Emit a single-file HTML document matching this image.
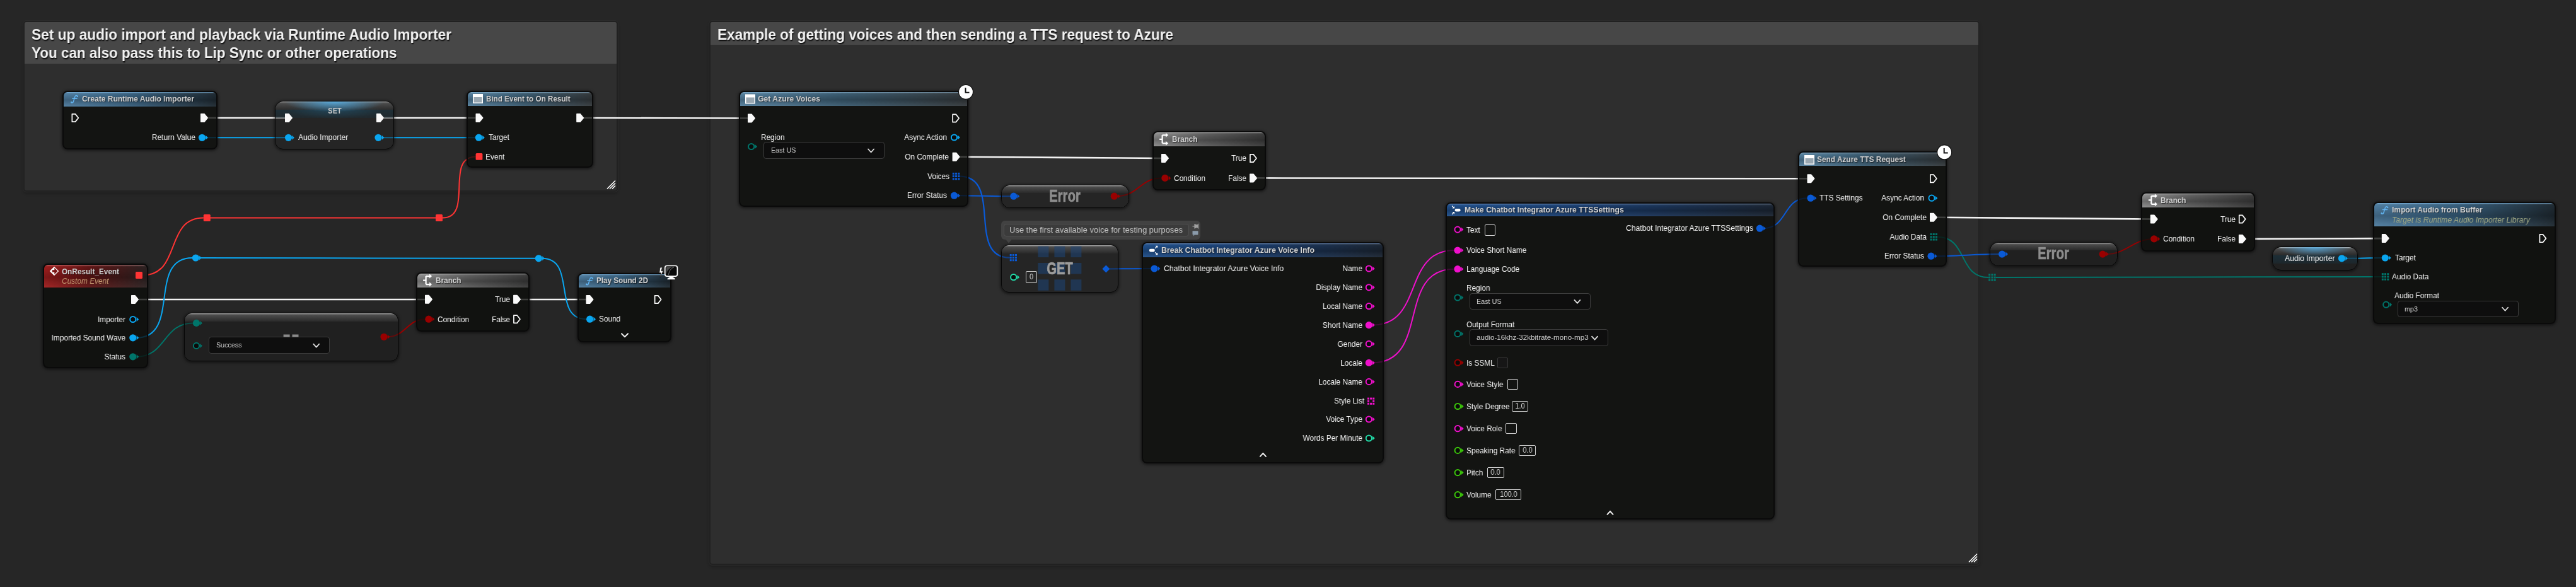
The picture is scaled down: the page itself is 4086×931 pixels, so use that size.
<!DOCTYPE html><html><head><meta charset="utf-8"><style>
html,body{margin:0;padding:0;}
body{width:4086px;height:931px;background:#262626;position:relative;overflow:hidden;font-family:"Liberation Sans",sans-serif;}
.cm{position:absolute;background:#2e2e2e;border-radius:3px;box-shadow:0 0 0 2px #212121,0 0 0 3.2px #2a2a2a,0 3px 4px 2px rgba(0,0,0,.25);}
.cmh{position:absolute;left:0;top:0;right:0;background:#474747;border-radius:3px 3px 0 0;}
.nd{position:absolute;box-sizing:border-box;border:2px solid #0a0a0a;border-radius:8px;background:rgba(11,13,10,.78);box-shadow:0 1px 4px 1px rgba(0,0,0,.55);overflow:hidden;}
.nh{position:absolute;left:0;right:0;top:0;border-radius:5px 5px 0 0;}
.cn{position:absolute;box-sizing:border-box;border:1.8px solid #060606;background:rgba(27,27,27,.45);box-shadow:0 1px 4px 1px rgba(0,0,0,.55);overflow:hidden;}
.cg{position:absolute;left:0;right:0;top:0;background:linear-gradient(180deg,#c8c8c8 0,#6a6a6a 1.5px,#4a4a4a 3px,#2e2e2e 90%,#2a2a2a 100%);}
.glow{position:absolute;left:0;right:0;top:0;bottom:0;}
.dd{position:absolute;box-sizing:border-box;border:1px solid #3c3c3c;border-radius:4px;background:#0e0e0e;}
.vb{position:absolute;box-sizing:border-box;border:1px solid #cfcfcf;border-radius:2px;}
.t{position:absolute;white-space:nowrap;will-change:transform;}
svg{position:absolute;left:0;top:0;}
</style></head><body><div class="cm" style="left:39px;top:35px;width:939px;height:266.5px"><div class="cmh" style="height:65.5px"></div></div><div class="cm" style="left:1127px;top:35px;width:2011px;height:858.5px"><div class="cmh" style="height:36px"></div></div><svg width="4086" height="931" viewBox="0 0 4086 931"><path d="M330,187 C370.67,187 411.33,187 452,187" fill="none" stroke="#f2f2f2" stroke-width="2.6"/><path d="M609,187 C657.5,187 706,187 754.5,187" fill="none" stroke="#f2f2f2" stroke-width="2.6"/><path d="M926,187 C1012.83,187 1099.17,187.5 1186,187.5" fill="none" stroke="#f2f2f2" stroke-width="2.6"/><path d="M220,475 C371.33,475 522.67,475 674,475" fill="none" stroke="#f2f2f2" stroke-width="2.6"/><path d="M826,475 C860.5,475 895,475 929.5,475" fill="none" stroke="#f2f2f2" stroke-width="2.6"/><path d="M1522,248.8 C1629.4,248.8 1734.6,251 1842,251" fill="none" stroke="#f2f2f2" stroke-width="2.6"/><path d="M1994,282.4 C2285.13,282.4 2575.37,283.3 2866.5,283.3" fill="none" stroke="#f2f2f2" stroke-width="2.6"/><path d="M3073,344.8 C3186.5,344.8 3297.3,347.5 3410.8,347.5" fill="none" stroke="#f2f2f2" stroke-width="2.6"/><path d="M3575,378.9 C3642.87,378.9 3709.93,378.1 3777.8,378.1" fill="none" stroke="#f2f2f2" stroke-width="2.6"/><path d="M326,218.3 C368,218.3 410,218.3 452,218.3" fill="none" stroke="#0aa6f0" stroke-width="2"/><path d="M605.6,218.3 C655.1,218.3 704.5,218.2 754,218.2" fill="none" stroke="#0aa6f0" stroke-width="2"/><path d="M216,535.8 C287.93,535.8 233.07,409 305,409" fill="none" stroke="#0aa6f0" stroke-width="2"/><path d="M316,409 C493.93,409 671.07,409.8 849,409.8" fill="none" stroke="#0aa6f0" stroke-width="2"/><path d="M860,409.8 C915.47,409.8 874.53,506.2 930,506.2" fill="none" stroke="#0aa6f0" stroke-width="2"/><path d="M3720,409.8 C3739.6,409.8 3758.4,409 3778,409" fill="none" stroke="#0aa6f0" stroke-width="2"/><path d="M226,436.5 C288.57,436.5 260.23,345.6 322.8,345.6" fill="none" stroke="#ff3434" stroke-width="2"/><path d="M328.3,345.6 C451.03,345.6 573.77,345.6 696.5,345.6" fill="none" stroke="#ff3434" stroke-width="2"/><path d="M702,345.6 C751.93,345.6 704.67,248.4 754.6,248.4" fill="none" stroke="#ff3434" stroke-width="2"/><path d="M216,565.8 C263.8,565.8 258.2,512.4 306,512.4" fill="none" stroke="#00756a" stroke-width="2"/><path d="M3073,375.8 C3121.4,375.8 3105.6,440 3154,440" fill="none" stroke="#00756a" stroke-width="2"/><path d="M3166,440 C3370.3,440 3573.5,438.9 3777.8,438.9" fill="none" stroke="#00756a" stroke-width="2"/><path d="M614,534.3 C643.7,534.3 645.3,506.2 675,506.2" fill="none" stroke="#990000" stroke-width="2"/><path d="M1772,311.2 C1804.93,311.2 1809.07,282.4 1842,282.4" fill="none" stroke="#990000" stroke-width="2"/><path d="M3340,403.1 C3373.63,403.1 3383.07,378.9 3416.7,378.9" fill="none" stroke="#990000" stroke-width="2"/><path d="M1522,279.6 C1591.57,279.6 1532.13,408.6 1601.7,408.6" fill="none" stroke="#0a5ad6" stroke-width="2.2"/><path d="M1518.5,310.2 C1546.83,310.2 1574.17,311.2 1602.5,311.2" fill="none" stroke="#0a5ad6" stroke-width="2"/><path d="M1760,426.4 C1782.07,426.4 1803.73,426 1825.8,426" fill="none" stroke="#0a5ad6" stroke-width="2"/><path d="M2796.5,362.2 C2835.93,362.2 2827.37,314.2 2866.8,314.2" fill="none" stroke="#0a5ad6" stroke-width="2"/><path d="M3068,406.2 C3103.17,406.2 3135.23,403.1 3170.4,403.1" fill="none" stroke="#0a5ad6" stroke-width="2"/><path d="M2176.5,515.6 C2259.47,515.6 2223.83,397 2306.8,397" fill="none" stroke="#f010cc" stroke-width="2"/><path d="M2176.5,575.4 C2269.5,575.4 2213.8,426.7 2306.8,426.7" fill="none" stroke="#f010cc" stroke-width="2"/></svg><div class="nd " style="left:99px;top:143.5px;width:246px;height:93px"><div class="nh" style="height:23px;background:linear-gradient(180deg,rgba(130,195,245,.85) 0,rgba(255,255,255,.10) 1.5px,rgba(0,0,0,.0) 3px,rgba(0,0,0,.22) 55%,rgba(255,255,255,.04) 100%),linear-gradient(90deg,#4f7da0 0%,#38607e 45%,#1f2a32 100%)"></div></div><div class="cn " style="left:436.2px;top:159.7px;width:189.1px;height:77.1px;border-radius:13px"><div class="cg" style="height:14px;border-radius:12px 12px 0 0"></div><div class="glow" style="background:radial-gradient(ellipse 42% 15px at 50% 1px, rgba(85,175,230,.85), rgba(60,140,200,0) 100%), radial-gradient(ellipse 40% 14px at 50% 13px, rgba(40,110,150,.35), rgba(30,70,90,0) 100%), linear-gradient(180deg, rgba(0,0,0,0) 13px, rgba(25,55,70,.55) 13.5px, rgba(25,50,62,.35) 26px, rgba(0,0,0,0) 26.5px)"></div></div><div class="nd " style="left:740px;top:144px;width:200.5px;height:122px"><div class="nh" style="height:22px;background:linear-gradient(180deg,rgba(150,200,235,.75) 0,rgba(255,255,255,.10) 1.5px,rgba(0,0,0,.0) 3px,rgba(0,0,0,.22) 55%,rgba(255,255,255,.04) 100%),linear-gradient(90deg,#55809e 0%,#3a5b70 45%,#34393c 100%)"></div></div><div class="nd " style="left:68px;top:417.5px;width:167px;height:166px"><div class="nh" style="height:36.5px;background:linear-gradient(180deg,rgba(240,150,150,.75) 0,rgba(255,255,255,.10) 1.5px,rgba(0,0,0,.0) 3px,rgba(0,0,0,.22) 55%,rgba(255,255,255,.04) 100%),linear-gradient(90deg,#a01e1e 0%,#5e1414 45%,#2c2222 100%)"></div></div><div class="cn " style="left:291.9px;top:496.2px;width:340.4px;height:76.6px;border-radius:12px"><div class="cg" style="height:13px;border-radius:11px 11px 0 0"></div></div><div class="dd" style="left:331.2px;top:534.3px;width:191.5px;height:27.2px"></div><div class="nd " style="left:659.6px;top:431.8px;width:180.7px;height:94.4px"><div class="nh" style="height:22px;background:linear-gradient(180deg,rgba(230,230,230,.9) 0,rgba(255,255,255,.10) 1.5px,rgba(0,0,0,.0) 3px,rgba(0,0,0,.22) 55%,rgba(255,255,255,.04) 100%),linear-gradient(90deg,#8c8c8c 0%,#5e5e5e 45%,#3a3a3a 100%)"></div></div><div class="nd " style="left:915.8px;top:432.7px;width:148.8px;height:110.1px"><div class="nh" style="height:21.3px;background:linear-gradient(180deg,rgba(130,195,245,.85) 0,rgba(255,255,255,.10) 1.5px,rgba(0,0,0,.0) 3px,rgba(0,0,0,.22) 55%,rgba(255,255,255,.04) 100%),linear-gradient(90deg,#4f7da0 0%,#38607e 45%,#1f2a32 100%)"></div></div><div class="nd " style="left:1171.5px;top:143.7px;width:364.5px;height:184.4px"><div class="nh" style="height:22.3px;background:linear-gradient(180deg,rgba(150,200,235,.75) 0,rgba(255,255,255,.10) 1.5px,rgba(0,0,0,.0) 3px,rgba(0,0,0,.22) 55%,rgba(255,255,255,.04) 100%),linear-gradient(90deg,#55809e 0%,#3a5b70 45%,#34393c 100%)"></div></div><div class="dd" style="left:1211.4px;top:225.1px;width:191.2px;height:27.2px"></div><div class="nd " style="left:1827.6px;top:208px;width:180.7px;height:94.4px"><div class="nh" style="height:22px;background:linear-gradient(180deg,rgba(230,230,230,.9) 0,rgba(255,255,255,.10) 1.5px,rgba(0,0,0,.0) 3px,rgba(0,0,0,.22) 55%,rgba(255,255,255,.04) 100%),linear-gradient(90deg,#8c8c8c 0%,#5e5e5e 45%,#3a3a3a 100%)"></div></div><div class="cn " style="left:1588.2px;top:292.5px;width:202.9px;height:37.6px;border-radius:13.5px"><div class="cg" style="height:12.5px;border-radius:12.5px 12.5px 0 0"></div></div><div style="position:absolute;left:1588px;top:350px;width:316.4px;height:29.8px;background:#424242;border-radius:6px"></div><div style="position:absolute;left:1592.2px;top:354.6px;width:293.6px;height:20.9px;box-sizing:border-box;background:#3b3b3b;border:1px solid #505050;border-radius:4px"></div><div class="cn " style="left:1588.3px;top:388.1px;width:185.5px;height:75.6px;border-radius:12px"><div class="cg" style="height:13px;border-radius:11px 11px 0 0"></div></div><div class="vb" style="left:1627.3px;top:430.2px;width:17.4px;height:18.6px;border-color:#cfcfcf;background:transparent"></div><div class="nd " style="left:1811.4px;top:384px;width:383.3px;height:350.8px"><div class="nh" style="height:21.5px;background:linear-gradient(180deg,rgba(130,170,230,.9) 0,rgba(255,255,255,.10) 1.5px,rgba(0,0,0,.0) 3px,rgba(0,0,0,.22) 55%,rgba(255,255,255,.04) 100%),linear-gradient(90deg,#20508c 0%,#1a3c6c 45%,#1c2634 100%)"></div></div><div class="nd " style="left:2292.6px;top:320.5px;width:522.4px;height:503.8px"><div class="nh" style="height:20.7px;background:linear-gradient(180deg,rgba(130,170,230,.9) 0,rgba(255,255,255,.10) 1.5px,rgba(0,0,0,.0) 3px,rgba(0,0,0,.22) 55%,rgba(255,255,255,.04) 100%),linear-gradient(90deg,#20508c 0%,#1a3c6c 45%,#1c2634 100%)"></div></div><div class="vb" style="left:2354.6px;top:356px;width:17px;height:18px;border-color:#cfcfcf;background:transparent"></div><div class="dd" style="left:2331px;top:464.7px;width:191.9px;height:26.8px"></div><div class="dd" style="left:2331px;top:522.2px;width:219.6px;height:27.3px"></div><div class="vb" style="left:2374.5px;top:566.5px;width:17.5px;height:17.4px;border-color:#383838;background:#161616"></div><div class="vb" style="left:2390.5px;top:600.7px;width:17.3px;height:17.4px;border-color:#cfcfcf;background:transparent"></div><div class="vb" style="left:2397.5px;top:636px;width:26.3px;height:17px;border-color:#cfcfcf;background:transparent"></div><div class="vb" style="left:2388px;top:671px;width:18px;height:17.4px;border-color:#cfcfcf;background:transparent"></div><div class="vb" style="left:2409.3px;top:705.9px;width:26.7px;height:17px;border-color:#cfcfcf;background:transparent"></div><div class="vb" style="left:2358.7px;top:741.1px;width:27.3px;height:17px;border-color:#cfcfcf;background:transparent"></div><div class="vb" style="left:2372px;top:776.2px;width:41.3px;height:17px;border-color:#cfcfcf;background:transparent"></div><div class="nd " style="left:2851.7px;top:239.7px;width:235.9px;height:183.6px"><div class="nh" style="height:21.7px;background:linear-gradient(180deg,rgba(150,200,235,.75) 0,rgba(255,255,255,.10) 1.5px,rgba(0,0,0,.0) 3px,rgba(0,0,0,.22) 55%,rgba(255,255,255,.04) 100%),linear-gradient(90deg,#55809e 0%,#3a5b70 45%,#34393c 100%)"></div></div><div class="cn " style="left:3156.2px;top:383.9px;width:202.6px;height:38.1px;border-radius:13.5px"><div class="cg" style="height:12.5px;border-radius:12.5px 12.5px 0 0"></div></div><div class="nd " style="left:3396.4px;top:304.5px;width:180.7px;height:94.4px"><div class="nh" style="height:22px;background:linear-gradient(180deg,rgba(230,230,230,.9) 0,rgba(255,255,255,.10) 1.5px,rgba(0,0,0,.0) 3px,rgba(0,0,0,.22) 55%,rgba(255,255,255,.04) 100%),linear-gradient(90deg,#8c8c8c 0%,#5e5e5e 45%,#3a3a3a 100%)"></div></div><div class="cn " style="left:3603.8px;top:391.2px;width:136.2px;height:37.6px;border-radius:14px"><div class="cg" style="height:13px;border-radius:13px 13px 0 0"></div><div class="glow" style="background:radial-gradient(ellipse 45% 14px at 50% 1px, rgba(85,175,230,.8), rgba(60,140,200,0) 100%), linear-gradient(180deg, rgba(0,0,0,0) 12.5px, rgba(25,55,70,.6) 13px, rgba(25,50,62,.4) 25.5px, rgba(0,0,0,0) 26px)"></div></div><div class="nd " style="left:3764px;top:320px;width:290.2px;height:194.2px"><div class="nh" style="height:36.7px;background:linear-gradient(180deg,rgba(130,195,245,.85) 0,rgba(255,255,255,.10) 1.5px,rgba(0,0,0,.0) 3px,rgba(0,0,0,.22) 55%,rgba(255,255,255,.04) 100%),linear-gradient(90deg,#4f7da0 0%,#38607e 45%,#1f2a32 100%)"></div></div><div class="dd" style="left:3803.1px;top:476.6px;width:191.5px;height:26.7px"></div><svg width="4086" height="931" viewBox="0 0 4086 931"><path d="M963,299.5 L976,286.5" stroke="#ffffff" stroke-width="1.6"/><path d="M967,299.5 L976,290.5" stroke="#ffffff" stroke-width="1.6"/><path d="M971,299.5 L976,294.5" stroke="#ffffff" stroke-width="1.6"/><path d="M3123,891.5 L3136,878.5" stroke="#ffffff" stroke-width="1.6"/><path d="M3127,891.5 L3136,882.5" stroke="#ffffff" stroke-width="1.6"/><path d="M3131,891.5 L3136,886.5" stroke="#ffffff" stroke-width="1.6"/><path d="M123.1,153 C122.3,151 119.5,151.1 118.8,153.4 L116.5,161 C115.8,163.4 113.7,163.6 112.7,162.2 M114.9,156.2 L122.1,156.2" fill="none" stroke="#62b4f0" stroke-width="1.5" stroke-linecap="round"/><circle cx="122.7" cy="152.9" r="1.1" fill="#62b4f0"/><circle cx="113.3" cy="162" r="1.1" fill="#62b4f0"/><path d="M114.35,180.85 L119.5,180.85 L124.35,187 L119.5,193.15 L114.35,193.15 Z" fill="none" stroke="#fafafa" stroke-width="1.7" stroke-linejoin="round"/><path d="M318.8,180.8 L324,180.8 L329.2,187 L324,193.2 L318.8,193.2 Z" fill="#fafafa" stroke="#fafafa" stroke-width="1.6" stroke-linejoin="round"/><circle cx="320.5" cy="218.3" r="5.6" fill="#0aa6f0"/><path d="M326.3,214.8 L329.9,218.3 L326.3,221.8 Z" fill="#0aa6f0"/><path d="M452.8,180.8 L458,180.8 L463.2,187 L458,193.2 L452.8,193.2 Z" fill="#fafafa" stroke="#fafafa" stroke-width="1.6" stroke-linejoin="round"/><path d="M597.8,180.8 L603,180.8 L608.2,187 L603,193.2 L597.8,193.2 Z" fill="#fafafa" stroke="#fafafa" stroke-width="1.6" stroke-linejoin="round"/><circle cx="457.5" cy="218.3" r="5.6" fill="#0aa6f0"/><path d="M463.3,214.8 L466.9,218.3 L463.3,221.8 Z" fill="#0aa6f0"/><circle cx="600" cy="218.3" r="5.6" fill="#0aa6f0"/><path d="M605.8,214.8 L609.4,218.3 L605.8,221.8 Z" fill="#0aa6f0"/><rect x="750.75" y="149.75" width="14.5" height="13.5" fill="#9aa8b2" stroke="#ffffff" stroke-width="1.5"/><rect x="751" y="150" width="14" height="4" fill="#ffffff"/><path d="M755.3,180.8 L760.5,180.8 L765.7,187 L760.5,193.2 L755.3,193.2 Z" fill="#fafafa" stroke="#fafafa" stroke-width="1.6" stroke-linejoin="round"/><path d="M915,180.8 L920.2,180.8 L925.4,187 L920.2,193.2 L915,193.2 Z" fill="#fafafa" stroke="#fafafa" stroke-width="1.6" stroke-linejoin="round"/><circle cx="759.4" cy="218.2" r="5.6" fill="#0aa6f0"/><path d="M765.2,214.7 L768.8,218.2 L765.2,221.7 Z" fill="#0aa6f0"/><rect x="754.6" y="243" width="10.8" height="10.8" rx="1.5" fill="#ff3434"/><path d="M86,422.7 L93.3,430 L86,437.3 L78.7,430 Z" fill="#ffffff"/><path d="M82.8,428.3 L86.3,428.3 L86.3,424.7 L91.5,430 L86.3,435.3 L86.3,431.7 L82.8,431.7 Z" fill="#7a1515"/><rect x="215" y="431" width="11" height="11" rx="1.5" fill="#ff3434"/><path d="M208.8,468.8 L214,468.8 L219.2,475 L214,481.2 L208.8,481.2 Z" fill="#fafafa" stroke="#fafafa" stroke-width="1.6" stroke-linejoin="round"/><circle cx="210.8" cy="506.5" r="4.6" fill="#0b0b0b" stroke="#0aa6f0" stroke-width="2"/><path d="M216.6,503 L220.2,506.5 L216.6,510 Z" fill="#0aa6f0"/><circle cx="210.8" cy="535.8" r="5.6" fill="#0aa6f0"/><path d="M216.6,532.3 L220.2,535.8 L216.6,539.3 Z" fill="#0aa6f0"/><circle cx="210.8" cy="565.8" r="5.6" fill="#00756a"/><path d="M216.6,562.3 L220.2,565.8 L216.6,569.3 Z" fill="#00756a"/><rect x="449.6" y="530.5" width="10" height="4" fill="#8a8a8a"/><rect x="463.5" y="530.5" width="10" height="4" fill="#8a8a8a"/><circle cx="311.5" cy="512.4" r="5.6" fill="#00756a"/><path d="M317.3,508.9 L320.9,512.4 L317.3,515.9 Z" fill="#00756a"/><circle cx="311.5" cy="548.4" r="4.6" fill="#0b0b0b" stroke="#00756a" stroke-width="2"/><path d="M317.3,544.9 L320.9,548.4 L317.3,551.9 Z" fill="#00756a"/><path d="M497.2,545.7 L501.7,550.7 L506.2,545.7" fill="none" stroke="#dddddd" stroke-width="1.8" stroke-linecap="round" stroke-linejoin="round"/><circle cx="609" cy="534.3" r="5.6" fill="#990000"/><path d="M614.8,530.8 L618.4,534.3 L614.8,537.8 Z" fill="#990000"/><path d="M671.1,444.6 L676.1,444.6 M675.6,438.1 L675.6,451.1 M675.6,438.1 L682.1,438.1 M675.6,451.1 L682.1,451.1" fill="none" stroke="#ffffff" stroke-width="2.2"/><path d="M681.1,434.6 L685.1,438.1 L681.1,441.6 Z" fill="#ffffff"/><path d="M681.1,447.6 L685.1,451.1 L681.1,454.6 Z" fill="#ffffff"/><path d="M674.8,468.6 L680,468.6 L685.2,474.8 L680,481 L674.8,481 Z" fill="#fafafa" stroke="#fafafa" stroke-width="1.6" stroke-linejoin="round"/><path d="M814.9,468.6 L820.1,468.6 L825.3,474.8 L820.1,481 L814.9,481 Z" fill="#fafafa" stroke="#fafafa" stroke-width="1.6" stroke-linejoin="round"/><circle cx="679.9" cy="506.2" r="5.6" fill="#990000"/><path d="M685.7,502.7 L689.3,506.2 L685.7,509.7 Z" fill="#990000"/><path d="M814.95,500.05 L820.1,500.05 L824.95,506.2 L820.1,512.35 L814.95,512.35 Z" fill="none" stroke="#fafafa" stroke-width="1.7" stroke-linejoin="round"/><path d="M940.1,441.7 C939.3,439.7 936.5,439.8 935.8,442.1 L933.5,449.7 C932.8,452.1 930.7,452.3 929.7,450.9 M931.9,444.9 L939.1,444.9" fill="none" stroke="#62b4f0" stroke-width="1.5" stroke-linecap="round"/><circle cx="939.7" cy="441.6" r="1.1" fill="#62b4f0"/><circle cx="930.3" cy="450.7" r="1.1" fill="#62b4f0"/><path d="M930.3,468.8 L935.5,468.8 L940.7,475 L935.5,481.2 L930.3,481.2 Z" fill="#fafafa" stroke="#fafafa" stroke-width="1.6" stroke-linejoin="round"/><path d="M1038.65,468.85 L1043.8,468.85 L1048.65,475 L1043.8,481.15 L1038.65,481.15 Z" fill="none" stroke="#fafafa" stroke-width="1.7" stroke-linejoin="round"/><circle cx="935.6" cy="506.2" r="5.6" fill="#0aa6f0"/><path d="M941.4,502.7 L945,506.2 L941.4,509.7 Z" fill="#0aa6f0"/><path d="M986,529.3 L991,534.3 L996,529.3" fill="none" stroke="#eeeeee" stroke-width="2" stroke-linecap="round" stroke-linejoin="round"/><path d="M1047,424.2 L1050.5,424 L1048.8,429.7 L1051.8,429.7 L1047.2,440.3 L1048.5,432.7 L1045.8,432.7 Z" fill="#ffffff" stroke="#111" stroke-width=".6"/><rect x="1054.8" y="421.5" width="19.6" height="16.6" rx="3.2" fill="#0a0a0a" stroke="#ffffff" stroke-width="1.7"/><path d="M1057,435.2 C1058,428.7 1062,424.7 1068,423.2 L1057,423.2 Z" fill="#4a4a4a"/><path d="M1060.5,435.7 C1061.5,429.7 1064,425.7 1069,423.7" fill="none" stroke="#777" stroke-width="1"/><path d="M1062.8,438.9 L1066.6,438.9 L1071,441.9 Q1071.6,443.3 1070,443.3 L1059.4,443.3 Q1057.8,443.3 1058.4,441.9 Z" fill="#ffffff"/><rect x="1182.75" y="150.25" width="14.5" height="13.5" fill="#9aa8b2" stroke="#ffffff" stroke-width="1.5"/><rect x="1183" y="150.5" width="14" height="4" fill="#ffffff"/><circle cx="1532" cy="145.8" r="11.5" fill="#ffffff" stroke="#101010" stroke-width="1.2"/><path d="M1531.5,139.3 L1531.5,146.8 L1537.5,146.8" fill="none" stroke="#111" stroke-width="2"/><path d="M1186.8,181.3 L1192,181.3 L1197.2,187.5 L1192,193.7 L1186.8,193.7 Z" fill="#fafafa" stroke="#fafafa" stroke-width="1.6" stroke-linejoin="round"/><path d="M1511.15,181.35 L1516.3,181.35 L1521.15,187.5 L1516.3,193.65 L1511.15,193.65 Z" fill="none" stroke="#fafafa" stroke-width="1.7" stroke-linejoin="round"/><circle cx="1191.7" cy="232.5" r="4.6" fill="#0b0b0b" stroke="#00756a" stroke-width="2"/><path d="M1197.5,229 L1201.1,232.5 L1197.5,236 Z" fill="#00756a"/><path d="M1377.1,236.5 L1381.6,241.5 L1386.1,236.5" fill="none" stroke="#dddddd" stroke-width="1.8" stroke-linecap="round" stroke-linejoin="round"/><circle cx="1513.5" cy="218" r="4.6" fill="#0b0b0b" stroke="#0aa6f0" stroke-width="2"/><path d="M1519.3,214.5 L1522.9,218 L1519.3,221.5 Z" fill="#0aa6f0"/><path d="M1511.4,242.6 L1516.6,242.6 L1521.8,248.8 L1516.6,255 L1511.4,255 Z" fill="#fafafa" stroke="#fafafa" stroke-width="1.6" stroke-linejoin="round"/><rect x="1510.8" y="273.85" width="3" height="3" fill="#0a5ad6"/><rect x="1515.05" y="273.85" width="3" height="3" fill="#0a5ad6"/><rect x="1519.3" y="273.85" width="3" height="3" fill="#0a5ad6"/><rect x="1510.8" y="278.1" width="3" height="3" fill="#0a5ad6"/><rect x="1515.05" y="278.1" width="3" height="3" fill="#0a5ad6"/><rect x="1519.3" y="278.1" width="3" height="3" fill="#0a5ad6"/><rect x="1510.8" y="282.35" width="3" height="3" fill="#0a5ad6"/><rect x="1515.05" y="282.35" width="3" height="3" fill="#0a5ad6"/><rect x="1519.3" y="282.35" width="3" height="3" fill="#0a5ad6"/><circle cx="1513.5" cy="310.2" r="5.6" fill="#0a5ad6"/><path d="M1519.3,306.7 L1522.9,310.2 L1519.3,313.7 Z" fill="#0a5ad6"/><path d="M1839.1,220.8 L1844.1,220.8 M1843.6,214.3 L1843.6,227.3 M1843.6,214.3 L1850.1,214.3 M1843.6,227.3 L1850.1,227.3" fill="none" stroke="#ffffff" stroke-width="2.2"/><path d="M1849.1,210.8 L1853.1,214.3 L1849.1,217.8 Z" fill="#ffffff"/><path d="M1849.1,223.8 L1853.1,227.3 L1849.1,230.8 Z" fill="#ffffff"/><path d="M1842.8,244.8 L1848,244.8 L1853.2,251 L1848,257.2 L1842.8,257.2 Z" fill="#fafafa" stroke="#fafafa" stroke-width="1.6" stroke-linejoin="round"/><path d="M1982.95,244.85 L1988.1,244.85 L1992.95,251 L1988.1,257.15 L1982.95,257.15 Z" fill="none" stroke="#fafafa" stroke-width="1.7" stroke-linejoin="round"/><circle cx="1847.9" cy="282.4" r="5.6" fill="#990000"/><path d="M1853.7,278.9 L1857.3,282.4 L1853.7,285.9 Z" fill="#990000"/><path d="M1982.9,276.2 L1988.1,276.2 L1993.3,282.4 L1988.1,288.6 L1982.9,288.6 Z" fill="#fafafa" stroke="#fafafa" stroke-width="1.6" stroke-linejoin="round"/><circle cx="1607.8" cy="311.2" r="5.6" fill="#0a5ad6"/><path d="M1613.6,307.7 L1617.2,311.2 L1613.6,314.7 Z" fill="#0a5ad6"/><circle cx="1767.3" cy="311.2" r="5.6" fill="#990000"/><path d="M1773.1,307.7 L1776.7,311.2 L1773.1,314.7 Z" fill="#990000"/><path d="M1595,379.6 L1600,385.5 L1605,379.6 Z" fill="#424242"/><path d="M1891.5,358.8 L1895,358.8 M1895,355.8 L1895,361.8 L1899,360.3 L1900.5,361.8 L1900.5,355.8 L1899,357.3 Z" stroke="#a0a0a0" stroke-width="1.2" fill="#a0a0a0"/><rect x="1891.5" y="366.2" width="9" height="6.2" rx="1" fill="#8a9aaa"/><path d="M1893,372.4 L1893,374.5 L1895,372.4 Z" fill="#8a9aaa"/><rect x="1646.4" y="390.6" width="17" height="17.5" fill="rgba(30,70,120,.55)"/><rect x="1646.4" y="417" width="17" height="17.5" fill="rgba(30,70,120,.55)"/><rect x="1646.4" y="443.3" width="17" height="17.5" fill="rgba(30,70,120,.55)"/><rect x="1672.4" y="390.6" width="17" height="17.5" fill="rgba(30,70,120,.55)"/><rect x="1672.4" y="417" width="17" height="17.5" fill="rgba(30,70,120,.55)"/><rect x="1672.4" y="443.3" width="17" height="17.5" fill="rgba(30,70,120,.55)"/><rect x="1698.4" y="390.6" width="17" height="17.5" fill="rgba(30,70,120,.55)"/><rect x="1698.4" y="417" width="17" height="17.5" fill="rgba(30,70,120,.55)"/><rect x="1698.4" y="443.3" width="17" height="17.5" fill="rgba(30,70,120,.55)"/><rect x="1601.7" y="402.95" width="3" height="3" fill="#0a5ad6"/><rect x="1605.85" y="402.95" width="3" height="3" fill="#0a5ad6"/><rect x="1610" y="402.95" width="3" height="3" fill="#0a5ad6"/><rect x="1601.7" y="407.1" width="3" height="3" fill="#0a5ad6"/><rect x="1605.85" y="407.1" width="3" height="3" fill="#0a5ad6"/><rect x="1610" y="407.1" width="3" height="3" fill="#0a5ad6"/><rect x="1601.7" y="411.25" width="3" height="3" fill="#0a5ad6"/><rect x="1605.85" y="411.25" width="3" height="3" fill="#0a5ad6"/><rect x="1610" y="411.25" width="3" height="3" fill="#0a5ad6"/><circle cx="1607.7" cy="439.7" r="4.6" fill="#0b0b0b" stroke="#22dca8" stroke-width="2"/><path d="M1613.5,436.2 L1617.1,439.7 L1613.5,443.2 Z" fill="#22dca8"/><path d="M1754.4,420.4 L1760.4,426.4 L1754.4,432.4 L1748.4,426.4 Z" fill="#0a5ad6"/><rect x="1822.8" y="394.8" width="9" height="4.6" rx="2.3" fill="#fff"/><path d="M1832.3,393.8 L1835.3,390.8 M1832.3,400.3 L1835.3,403.3" stroke="#fff" stroke-width="1.3"/><path d="M1832.8,389.8 L1836.3,389.8 L1836.3,393.3 Z M1832.8,404.3 L1836.3,404.3 L1836.3,400.8 Z" fill="#fff"/><circle cx="1831" cy="426" r="5.6" fill="#0a5ad6"/><path d="M1836.8,422.5 L1840.4,426 L1836.8,429.5 Z" fill="#0a5ad6"/><circle cx="2171.3" cy="426" r="4.6" fill="#0b0b0b" stroke="#f010cc" stroke-width="2"/><path d="M2177.1,422.5 L2180.7,426 L2177.1,429.5 Z" fill="#f010cc"/><circle cx="2171.3" cy="455.8" r="4.6" fill="#0b0b0b" stroke="#f010cc" stroke-width="2"/><path d="M2177.1,452.3 L2180.7,455.8 L2177.1,459.3 Z" fill="#f010cc"/><circle cx="2171.3" cy="485.7" r="4.6" fill="#0b0b0b" stroke="#f010cc" stroke-width="2"/><path d="M2177.1,482.2 L2180.7,485.7 L2177.1,489.2 Z" fill="#f010cc"/><circle cx="2171.3" cy="515.6" r="5.6" fill="#f010cc"/><path d="M2177.1,512.1 L2180.7,515.6 L2177.1,519.1 Z" fill="#f010cc"/><circle cx="2171.3" cy="545.4" r="4.6" fill="#0b0b0b" stroke="#f010cc" stroke-width="2"/><path d="M2177.1,541.9 L2180.7,545.4 L2177.1,548.9 Z" fill="#f010cc"/><circle cx="2171.3" cy="575.4" r="5.6" fill="#f010cc"/><path d="M2177.1,571.9 L2180.7,575.4 L2177.1,578.9 Z" fill="#f010cc"/><circle cx="2171.3" cy="605.4" r="4.6" fill="#0b0b0b" stroke="#f010cc" stroke-width="2"/><path d="M2177.1,601.9 L2180.7,605.4 L2177.1,608.9 Z" fill="#f010cc"/><rect x="2169" y="630.6" width="3" height="3" fill="#f010cc"/><rect x="2173.1" y="630.6" width="3" height="3" fill="#f010cc"/><rect x="2177.2" y="630.6" width="3" height="3" fill="#f010cc"/><rect x="2169" y="634.7" width="3" height="3" fill="#f010cc"/><rect x="2177.2" y="634.7" width="3" height="3" fill="#f010cc"/><rect x="2169" y="638.8" width="3" height="3" fill="#f010cc"/><rect x="2173.1" y="638.8" width="3" height="3" fill="#f010cc"/><rect x="2177.2" y="638.8" width="3" height="3" fill="#f010cc"/><circle cx="2171.3" cy="665" r="4.6" fill="#0b0b0b" stroke="#f010cc" stroke-width="2"/><path d="M2177.1,661.5 L2180.7,665 L2177.1,668.5 Z" fill="#f010cc"/><circle cx="2171.3" cy="695" r="4.6" fill="#0b0b0b" stroke="#22dca8" stroke-width="2"/><path d="M2177.1,691.5 L2180.7,695 L2177.1,698.5 Z" fill="#22dca8"/><path d="M1998.9,723.9 L2003.4,718.9 L2007.9,723.9" fill="none" stroke="#eeeeee" stroke-width="2" stroke-linecap="round" stroke-linejoin="round"/><rect x="2307.6" y="331" width="9" height="4.6" rx="2.3" fill="#fff"/><path d="M2303.1,326.5 L2306.1,329.5 M2303.1,340 L2306.1,337" stroke="#fff" stroke-width="1.3"/><path d="M2307.1,330.5 L2307.1,327 L2303.6,330.5 Z M2307.1,336 L2307.1,339.5 L2303.6,336 Z" fill="#fff"/><circle cx="2312" cy="364.1" r="4.6" fill="#0b0b0b" stroke="#f010cc" stroke-width="2"/><path d="M2317.8,360.6 L2321.4,364.1 L2317.8,367.6 Z" fill="#f010cc"/><circle cx="2791.3" cy="362.2" r="5.6" fill="#0a5ad6"/><path d="M2797.1,358.7 L2800.7,362.2 L2797.1,365.7 Z" fill="#0a5ad6"/><circle cx="2312" cy="397" r="5.6" fill="#f010cc"/><path d="M2317.8,393.5 L2321.4,397 L2317.8,400.5 Z" fill="#f010cc"/><circle cx="2312" cy="426.7" r="5.6" fill="#f010cc"/><path d="M2317.8,423.2 L2321.4,426.7 L2317.8,430.2 Z" fill="#f010cc"/><circle cx="2312" cy="472" r="4.6" fill="#0b0b0b" stroke="#00756a" stroke-width="2"/><path d="M2317.8,468.5 L2321.4,472 L2317.8,475.5 Z" fill="#00756a"/><path d="M2497.4,475.9 L2501.9,480.9 L2506.4,475.9" fill="none" stroke="#dddddd" stroke-width="1.8" stroke-linecap="round" stroke-linejoin="round"/><circle cx="2312" cy="529.4" r="4.6" fill="#0b0b0b" stroke="#00756a" stroke-width="2"/><path d="M2317.8,525.9 L2321.4,529.4 L2317.8,532.9 Z" fill="#00756a"/><path d="M2525,533.7 L2529.5,538.7 L2534,533.7" fill="none" stroke="#dddddd" stroke-width="1.8" stroke-linecap="round" stroke-linejoin="round"/><circle cx="2312.2" cy="575.2" r="4.6" fill="#0b0b0b" stroke="#990000" stroke-width="2"/><path d="M2318,571.7 L2321.6,575.2 L2318,578.7 Z" fill="#990000"/><circle cx="2312.2" cy="609.4" r="4.6" fill="#0b0b0b" stroke="#f010cc" stroke-width="2"/><path d="M2318,605.9 L2321.6,609.4 L2318,612.9 Z" fill="#f010cc"/><circle cx="2312.2" cy="644.5" r="4.6" fill="#0b0b0b" stroke="#3cc80a" stroke-width="2"/><path d="M2318,641 L2321.6,644.5 L2318,648 Z" fill="#3cc80a"/><circle cx="2312.2" cy="679.7" r="4.6" fill="#0b0b0b" stroke="#f010cc" stroke-width="2"/><path d="M2318,676.2 L2321.6,679.7 L2318,683.2 Z" fill="#f010cc"/><circle cx="2312.2" cy="714.4" r="4.6" fill="#0b0b0b" stroke="#3cc80a" stroke-width="2"/><path d="M2318,710.9 L2321.6,714.4 L2318,717.9 Z" fill="#3cc80a"/><circle cx="2312.2" cy="749.6" r="4.6" fill="#0b0b0b" stroke="#3cc80a" stroke-width="2"/><path d="M2318,746.1 L2321.6,749.6 L2318,753.1 Z" fill="#3cc80a"/><circle cx="2312.2" cy="784.7" r="4.6" fill="#0b0b0b" stroke="#3cc80a" stroke-width="2"/><path d="M2318,781.2 L2321.6,784.7 L2318,788.2 Z" fill="#3cc80a"/><path d="M2549.5,815.8 L2554,810.8 L2558.5,815.8" fill="none" stroke="#eeeeee" stroke-width="2" stroke-linecap="round" stroke-linejoin="round"/><rect x="2862.75" y="246.75" width="14.5" height="13.5" fill="#9aa8b2" stroke="#ffffff" stroke-width="1.5"/><rect x="2863" y="247" width="14" height="4" fill="#ffffff"/><circle cx="3084.2" cy="241.4" r="11.5" fill="#ffffff" stroke="#101010" stroke-width="1.2"/><path d="M3083.7,234.9 L3083.7,242.4 L3089.7,242.4" fill="none" stroke="#111" stroke-width="2"/><path d="M2867.3,277.1 L2872.5,277.1 L2877.7,283.3 L2872.5,289.5 L2867.3,289.5 Z" fill="#fafafa" stroke="#fafafa" stroke-width="1.6" stroke-linejoin="round"/><path d="M3061.85,277.15 L3067,277.15 L3071.85,283.3 L3067,289.45 L3061.85,289.45 Z" fill="none" stroke="#fafafa" stroke-width="1.7" stroke-linejoin="round"/><circle cx="2872" cy="314.2" r="5.6" fill="#0a5ad6"/><path d="M2877.8,310.7 L2881.4,314.2 L2877.8,317.7 Z" fill="#0a5ad6"/><circle cx="3064" cy="314.2" r="4.6" fill="#0b0b0b" stroke="#0aa6f0" stroke-width="2"/><path d="M3069.8,310.7 L3073.4,314.2 L3069.8,317.7 Z" fill="#0aa6f0"/><path d="M3061.8,338.6 L3067,338.6 L3072.2,344.8 L3067,351 L3061.8,351 Z" fill="#fafafa" stroke="#fafafa" stroke-width="1.6" stroke-linejoin="round"/><rect x="3061.5" y="370.05" width="3" height="3" fill="#00756a"/><rect x="3065.75" y="370.05" width="3" height="3" fill="#00756a"/><rect x="3070" y="370.05" width="3" height="3" fill="#00756a"/><rect x="3061.5" y="374.3" width="3" height="3" fill="#00756a"/><rect x="3065.75" y="374.3" width="3" height="3" fill="#00756a"/><rect x="3070" y="374.3" width="3" height="3" fill="#00756a"/><rect x="3061.5" y="378.55" width="3" height="3" fill="#00756a"/><rect x="3065.75" y="378.55" width="3" height="3" fill="#00756a"/><rect x="3070" y="378.55" width="3" height="3" fill="#00756a"/><circle cx="3063" cy="406.2" r="5.6" fill="#0a5ad6"/><path d="M3068.8,402.7 L3072.4,406.2 L3068.8,409.7 Z" fill="#0a5ad6"/><circle cx="3175.6" cy="403.1" r="5.6" fill="#0a5ad6"/><path d="M3181.4,399.6 L3185,403.1 L3181.4,406.6 Z" fill="#0a5ad6"/><circle cx="3335.2" cy="403.1" r="5.6" fill="#990000"/><path d="M3341,399.6 L3344.6,403.1 L3341,406.6 Z" fill="#990000"/><path d="M3407.9,317.3 L3412.9,317.3 M3412.4,310.8 L3412.4,323.8 M3412.4,310.8 L3418.9,310.8 M3412.4,323.8 L3418.9,323.8" fill="none" stroke="#ffffff" stroke-width="2.2"/><path d="M3417.9,307.3 L3421.9,310.8 L3417.9,314.3 Z" fill="#ffffff"/><path d="M3417.9,320.3 L3421.9,323.8 L3417.9,327.3 Z" fill="#ffffff"/><path d="M3411.6,341.3 L3416.8,341.3 L3422,347.5 L3416.8,353.7 L3411.6,353.7 Z" fill="#fafafa" stroke="#fafafa" stroke-width="1.6" stroke-linejoin="round"/><path d="M3551.75,341.35 L3556.9,341.35 L3561.75,347.5 L3556.9,353.65 L3551.75,353.65 Z" fill="none" stroke="#fafafa" stroke-width="1.7" stroke-linejoin="round"/><circle cx="3416.7" cy="378.9" r="5.6" fill="#990000"/><path d="M3422.5,375.4 L3426.1,378.9 L3422.5,382.4 Z" fill="#990000"/><path d="M3551.7,372.7 L3556.9,372.7 L3562.1,378.9 L3556.9,385.1 L3551.7,385.1 Z" fill="#fafafa" stroke="#fafafa" stroke-width="1.6" stroke-linejoin="round"/><circle cx="3714.5" cy="409.8" r="5.6" fill="#0aa6f0"/><path d="M3720.3,406.3 L3723.9,409.8 L3720.3,413.3 Z" fill="#0aa6f0"/><path d="M3787.6,329.2 C3786.8,327.2 3784,327.3 3783.3,329.6 L3781,337.2 C3780.3,339.6 3778.2,339.8 3777.2,338.4 M3779.4,332.4 L3786.6,332.4" fill="none" stroke="#62b4f0" stroke-width="1.5" stroke-linecap="round"/><circle cx="3787.2" cy="329.1" r="1.1" fill="#62b4f0"/><circle cx="3777.8" cy="338.2" r="1.1" fill="#62b4f0"/><path d="M3778.6,371.9 L3783.8,371.9 L3789,378.1 L3783.8,384.3 L3778.6,384.3 Z" fill="#fafafa" stroke="#fafafa" stroke-width="1.6" stroke-linejoin="round"/><path d="M4028.45,371.95 L4033.6,371.95 L4038.45,378.1 L4033.6,384.25 L4028.45,384.25 Z" fill="none" stroke="#fafafa" stroke-width="1.7" stroke-linejoin="round"/><circle cx="3783.3" cy="409" r="5.6" fill="#0aa6f0"/><path d="M3789.1,405.5 L3792.7,409 L3789.1,412.5 Z" fill="#0aa6f0"/><rect x="3777.8" y="433.15" width="3" height="3" fill="#00756a"/><rect x="3782.05" y="433.15" width="3" height="3" fill="#00756a"/><rect x="3786.3" y="433.15" width="3" height="3" fill="#00756a"/><rect x="3777.8" y="437.4" width="3" height="3" fill="#00756a"/><rect x="3782.05" y="437.4" width="3" height="3" fill="#00756a"/><rect x="3786.3" y="437.4" width="3" height="3" fill="#00756a"/><rect x="3777.8" y="441.65" width="3" height="3" fill="#00756a"/><rect x="3782.05" y="441.65" width="3" height="3" fill="#00756a"/><rect x="3786.3" y="441.65" width="3" height="3" fill="#00756a"/><circle cx="3784.8" cy="483.2" r="4.6" fill="#0b0b0b" stroke="#00756a" stroke-width="2"/><path d="M3790.6,479.7 L3794.2,483.2 L3790.6,486.7 Z" fill="#00756a"/><path d="M3969.1,487.75 L3973.6,492.75 L3978.1,487.75" fill="none" stroke="#dddddd" stroke-width="1.8" stroke-linecap="round" stroke-linejoin="round"/><rect x="322.8" y="340.1" width="11" height="11" rx="1.5" fill="#ff3434"/><rect x="691" y="340.1" width="11" height="11" rx="1.5" fill="#ff3434"/><circle cx="310.4" cy="409" r="5.6" fill="#0aa6f0"/><path d="M316.2,405.5 L319.8,409 L316.2,412.5 Z" fill="#0aa6f0"/><circle cx="854.4" cy="409.8" r="5.6" fill="#0aa6f0"/><path d="M860.2,406.3 L863.8,409.8 L860.2,413.3 Z" fill="#0aa6f0"/><rect x="3154.2" y="434.25" width="3" height="3" fill="#00756a"/><rect x="3158.45" y="434.25" width="3" height="3" fill="#00756a"/><rect x="3162.7" y="434.25" width="3" height="3" fill="#00756a"/><rect x="3154.2" y="438.5" width="3" height="3" fill="#00756a"/><rect x="3158.45" y="438.5" width="3" height="3" fill="#00756a"/><rect x="3162.7" y="438.5" width="3" height="3" fill="#00756a"/><rect x="3154.2" y="442.75" width="3" height="3" fill="#00756a"/><rect x="3158.45" y="442.75" width="3" height="3" fill="#00756a"/><rect x="3162.7" y="442.75" width="3" height="3" fill="#00756a"/></svg><div class="t" style="left:49.8px;top:42.96px;font-size:24.5px;line-height:24.5px;font-weight:bold;color:#f2f2f2;text-shadow:1px 1.5px 1.5px rgba(0,0,0,.85);transform:scaleX(0.9260);transform-origin:0 50%;">Set up audio import and playback via Runtime Audio Importer</div><div class="t" style="left:49.8px;top:71.76px;font-size:24.5px;line-height:24.5px;font-weight:bold;color:#f2f2f2;text-shadow:1px 1.5px 1.5px rgba(0,0,0,.85);transform:scaleX(0.9159);transform-origin:0 50%;">You can also pass this to Lip Sync or other operations</div><div class="t" style="left:1138px;top:43.26px;font-size:24.5px;line-height:24.5px;font-weight:bold;color:#f2f2f2;text-shadow:1px 1.5px 1.5px rgba(0,0,0,.85);transform:scaleX(0.9215);transform-origin:0 50%;">Example of getting voices and then sending a TTS request to Azure</div><div class="t" style="left:130.3px;top:150px;font-size:13px;line-height:13px;font-weight:bold;color:#d6d6d6;text-shadow:1px 1px 1px rgba(0,0,0,.6);transform:scaleX(0.9253);transform-origin:0 50%;">Create Runtime Audio Importer</div><div class="t" style="left:309.7px;top:211.47px;font-size:13px;line-height:13px;color:#f8f8f8;transform:translateX(-100%) scaleX(0.9236);transform-origin:100% 50%;">Return Value</div><div class="t" style="left:530.6px;top:169px;font-size:13px;line-height:13px;font-weight:bold;color:#cacaca;transform:translateX(-50%) scaleX(0.8539);transform-origin:50% 50%;">SET</div><div class="t" style="left:472.5px;top:211.47px;font-size:13px;line-height:13px;color:#f8f8f8;transform:scaleX(0.9289);transform-origin:0 50%;">Audio Importer</div><div class="t" style="left:770.6px;top:150.2px;font-size:13px;line-height:13px;font-weight:bold;color:#d6d6d6;text-shadow:1px 1px 1px rgba(0,0,0,.6);transform:scaleX(0.8979);transform-origin:0 50%;">Bind Event to On Result</div><div class="t" style="left:775px;top:211.47px;font-size:13px;line-height:13px;color:#f8f8f8;transform:scaleX(0.9100);transform-origin:0 50%;">Target</div><div class="t" style="left:770px;top:241.97px;font-size:13px;line-height:13px;color:#f8f8f8;transform:scaleX(0.9100);transform-origin:0 50%;">Event</div><div class="t" style="left:98.3px;top:423.5px;font-size:13px;line-height:13px;font-weight:bold;color:#d6d6d6;text-shadow:1px 1px 1px rgba(0,0,0,.6);transform:scaleX(0.9062);transform-origin:0 50%;">OnResult_Event</div><div class="t" style="left:98.3px;top:438.8px;font-size:13px;line-height:13px;font-style:italic;color:#c49a72;transform:scaleX(0.9124);transform-origin:0 50%;">Custom Event</div><div class="t" style="left:199.4px;top:499.97px;font-size:13px;line-height:13px;color:#f8f8f8;transform:translateX(-100%) scaleX(0.9100);transform-origin:100% 50%;">Importer</div><div class="t" style="left:199.4px;top:529.07px;font-size:13px;line-height:13px;color:#f8f8f8;transform:translateX(-100%) scaleX(0.9110);transform-origin:100% 50%;">Imported Sound Wave</div><div class="t" style="left:199.4px;top:559.17px;font-size:13px;line-height:13px;color:#f8f8f8;transform:translateX(-100%) scaleX(0.9100);transform-origin:100% 50%;">Status</div><div class="t" style="left:342.7px;top:542.47px;font-size:11.8px;line-height:11.8px;color:#d2d2d2;transform:scaleX(0.9100);transform-origin:0 50%;">Success</div><div class="t" style="left:690.5px;top:438px;font-size:13px;line-height:13px;font-weight:bold;color:#d6d6d6;text-shadow:1px 1px 1px rgba(0,0,0,.6);transform:scaleX(0.9041);transform-origin:0 50%;">Branch</div><div class="t" style="left:808.8px;top:468.27px;font-size:13px;line-height:13px;color:#f8f8f8;transform:translateX(-100%) scaleX(0.9100);transform-origin:100% 50%;">True</div><div class="t" style="left:694.1px;top:499.67px;font-size:13px;line-height:13px;color:#f8f8f8;transform:scaleX(0.9100);transform-origin:0 50%;">Condition</div><div class="t" style="left:808.8px;top:499.67px;font-size:13px;line-height:13px;color:#f8f8f8;transform:translateX(-100%) scaleX(0.9100);transform-origin:100% 50%;">False</div><div class="t" style="left:946.3px;top:438.2px;font-size:13px;line-height:13px;font-weight:bold;color:#d6d6d6;text-shadow:1px 1px 1px rgba(0,0,0,.6);transform:scaleX(0.8997);transform-origin:0 50%;">Play Sound 2D</div><div class="t" style="left:950px;top:499.47px;font-size:13px;line-height:13px;color:#f8f8f8;transform:scaleX(0.9100);transform-origin:0 50%;">Sound</div><div class="t" style="left:1202.2px;top:150.2px;font-size:13px;line-height:13px;font-weight:bold;color:#d6d6d6;text-shadow:1px 1px 1px rgba(0,0,0,.6);transform:scaleX(0.9385);transform-origin:0 50%;">Get Azure Voices</div><div class="t" style="left:1206.7px;top:211px;font-size:13px;line-height:13px;color:#f8f8f8;transform:scaleX(0.9100);transform-origin:0 50%;">Region</div><div class="t" style="left:1222.6px;top:233.27px;font-size:11.8px;line-height:11.8px;color:#d2d2d2;transform:scaleX(0.9100);transform-origin:0 50%;">East US</div><div class="t" style="left:1501.7px;top:211.47px;font-size:13px;line-height:13px;color:#f8f8f8;transform:translateX(-100%) scaleX(0.9100);transform-origin:100% 50%;">Async Action</div><div class="t" style="left:1505.3px;top:242.27px;font-size:13px;line-height:13px;color:#f8f8f8;transform:translateX(-100%) scaleX(0.9100);transform-origin:100% 50%;">On Complete</div><div class="t" style="left:1506px;top:273.07px;font-size:13px;line-height:13px;color:#f8f8f8;transform:translateX(-100%) scaleX(0.9100);transform-origin:100% 50%;">Voices</div><div class="t" style="left:1501.7px;top:303.47px;font-size:13px;line-height:13px;color:#f8f8f8;transform:translateX(-100%) scaleX(0.9100);transform-origin:100% 50%;">Error Status</div><div class="t" style="left:1858.5px;top:214.2px;font-size:13px;line-height:13px;font-weight:bold;color:#d6d6d6;text-shadow:1px 1px 1px rgba(0,0,0,.6);transform:scaleX(0.9041);transform-origin:0 50%;">Branch</div><div class="t" style="left:1976.8px;top:244.47px;font-size:13px;line-height:13px;color:#f8f8f8;transform:translateX(-100%) scaleX(0.9100);transform-origin:100% 50%;">True</div><div class="t" style="left:1862.1px;top:275.87px;font-size:13px;line-height:13px;color:#f8f8f8;transform:scaleX(0.9100);transform-origin:0 50%;">Condition</div><div class="t" style="left:1976.8px;top:275.87px;font-size:13px;line-height:13px;color:#f8f8f8;transform:translateX(-100%) scaleX(0.9100);transform-origin:100% 50%;">False</div><div class="t" style="left:1689.15px;top:295.67px;font-size:28.5px;line-height:28.5px;font-weight:bold;color:#8c8c8c;transform:translateX(-50%) scaleX(0.7145);transform-origin:50% 50%;-webkit-text-stroke:.7px #8c8c8c;">Error</div><div class="t" style="left:1601px;top:357.7px;font-size:13.7px;line-height:13.7px;color:#c6c6c6;transform:scaleX(0.9462);transform-origin:0 50%;">Use the first available voice for testing purposes</div><div class="t" style="left:1681.3px;top:411.64px;font-size:27.6px;line-height:27.6px;font-weight:bold;color:#9c9c9c;transform:translateX(-50%) scaleX(0.7280);transform-origin:50% 50%;-webkit-text-stroke:.7px #9c9c9c;">GET</div><div class="t" style="left:1636px;top:433.22px;font-size:12.5px;line-height:12.5px;color:#d8d8d8;transform:translateX(-50%) scaleX(0.8800);transform-origin:50% 50%;">0</div><div class="t" style="left:1842.3px;top:390.3px;font-size:13px;line-height:13px;font-weight:bold;color:#d6d6d6;text-shadow:1px 1px 1px rgba(0,0,0,.6);transform:scaleX(0.9450);transform-origin:0 50%;">Break Chatbot Integrator Azure Voice Info</div><div class="t" style="left:1846px;top:419.47px;font-size:13px;line-height:13px;color:#f8f8f8;transform:scaleX(0.9409);transform-origin:0 50%;">Chatbot Integrator Azure Voice Info</div><div class="t" style="left:2160.7px;top:419.47px;font-size:13px;line-height:13px;color:#f8f8f8;transform:translateX(-100%) scaleX(0.9100);transform-origin:100% 50%;">Name</div><div class="t" style="left:2160.7px;top:449.27px;font-size:13px;line-height:13px;color:#f8f8f8;transform:translateX(-100%) scaleX(0.9100);transform-origin:100% 50%;">Display Name</div><div class="t" style="left:2160.7px;top:479.17px;font-size:13px;line-height:13px;color:#f8f8f8;transform:translateX(-100%) scaleX(0.9100);transform-origin:100% 50%;">Local Name</div><div class="t" style="left:2160.7px;top:509.07px;font-size:13px;line-height:13px;color:#f8f8f8;transform:translateX(-100%) scaleX(0.9100);transform-origin:100% 50%;">Short Name</div><div class="t" style="left:2160.7px;top:538.87px;font-size:13px;line-height:13px;color:#f8f8f8;transform:translateX(-100%) scaleX(0.9100);transform-origin:100% 50%;">Gender</div><div class="t" style="left:2160.7px;top:568.87px;font-size:13px;line-height:13px;color:#f8f8f8;transform:translateX(-100%) scaleX(0.9100);transform-origin:100% 50%;">Locale</div><div class="t" style="left:2160.7px;top:598.87px;font-size:13px;line-height:13px;color:#f8f8f8;transform:translateX(-100%) scaleX(0.9100);transform-origin:100% 50%;">Locale Name</div><div class="t" style="left:2163.8px;top:628.67px;font-size:13px;line-height:13px;color:#f8f8f8;transform:translateX(-100%) scaleX(0.9100);transform-origin:100% 50%;">Style List</div><div class="t" style="left:2160.7px;top:658.47px;font-size:13px;line-height:13px;color:#f8f8f8;transform:translateX(-100%) scaleX(0.9100);transform-origin:100% 50%;">Voice Type</div><div class="t" style="left:2160.7px;top:688.47px;font-size:13px;line-height:13px;color:#f8f8f8;transform:translateX(-100%) scaleX(0.9100);transform-origin:100% 50%;">Words Per Minute</div><div class="t" style="left:2322.6px;top:326.2px;font-size:13px;line-height:13px;font-weight:bold;color:#d6d6d6;text-shadow:1px 1px 1px rgba(0,0,0,.6);transform:scaleX(0.9421);transform-origin:0 50%;">Make Chatbot Integrator Azure TTSSettings</div><div class="t" style="left:2326px;top:357.57px;font-size:13px;line-height:13px;color:#f8f8f8;transform:scaleX(0.9100);transform-origin:0 50%;">Text</div><div class="t" style="left:2781px;top:355.47px;font-size:13px;line-height:13px;color:#f8f8f8;transform:translateX(-100%) scaleX(0.9328);transform-origin:100% 50%;">Chatbot Integrator Azure TTSSettings</div><div class="t" style="left:2326px;top:390.47px;font-size:13px;line-height:13px;color:#f8f8f8;transform:scaleX(0.9100);transform-origin:0 50%;">Voice Short Name</div><div class="t" style="left:2326px;top:420.17px;font-size:13px;line-height:13px;color:#f8f8f8;transform:scaleX(0.9100);transform-origin:0 50%;">Language Code</div><div class="t" style="left:2326px;top:450.07px;font-size:13px;line-height:13px;color:#f8f8f8;transform:scaleX(0.9100);transform-origin:0 50%;">Region</div><div class="t" style="left:2342.2px;top:472.67px;font-size:11.8px;line-height:11.8px;color:#d2d2d2;transform:scaleX(0.9100);transform-origin:0 50%;">East US</div><div class="t" style="left:2326px;top:508.47px;font-size:13px;line-height:13px;color:#f8f8f8;transform:scaleX(0.9100);transform-origin:0 50%;">Output Format</div><div class="t" style="left:2342.2px;top:530.12px;font-size:11.5px;line-height:11.5px;color:#cfcfcf;transform:scaleX(1.0108);transform-origin:0 50%;">audio-16khz-32kbitrate-mono-mp3</div><div class="t" style="left:2326.3px;top:568.67px;font-size:13px;line-height:13px;color:#f8f8f8;transform:scaleX(0.9100);transform-origin:0 50%;">Is SSML</div><div class="t" style="left:2326.3px;top:602.87px;font-size:13px;line-height:13px;color:#f8f8f8;transform:scaleX(0.9100);transform-origin:0 50%;">Voice Style</div><div class="t" style="left:2326.3px;top:637.97px;font-size:13px;line-height:13px;color:#f8f8f8;transform:scaleX(0.9100);transform-origin:0 50%;">Style Degree</div><div class="t" style="left:2410.65px;top:638.22px;font-size:12.5px;line-height:12.5px;color:#d8d8d8;transform:translateX(-50%) scaleX(0.8800);transform-origin:50% 50%;">1.0</div><div class="t" style="left:2326.3px;top:673.17px;font-size:13px;line-height:13px;color:#f8f8f8;transform:scaleX(0.9100);transform-origin:0 50%;">Voice Role</div><div class="t" style="left:2326.3px;top:707.87px;font-size:13px;line-height:13px;color:#f8f8f8;transform:scaleX(0.9100);transform-origin:0 50%;">Speaking Rate</div><div class="t" style="left:2422.65px;top:708.12px;font-size:12.5px;line-height:12.5px;color:#d8d8d8;transform:translateX(-50%) scaleX(0.8800);transform-origin:50% 50%;">0.0</div><div class="t" style="left:2326.3px;top:743.07px;font-size:13px;line-height:13px;color:#f8f8f8;transform:scaleX(0.9100);transform-origin:0 50%;">Pitch</div><div class="t" style="left:2372.35px;top:743.32px;font-size:12.5px;line-height:12.5px;color:#d8d8d8;transform:translateX(-50%) scaleX(0.8800);transform-origin:50% 50%;">0.0</div><div class="t" style="left:2326.3px;top:778.17px;font-size:13px;line-height:13px;color:#f8f8f8;transform:scaleX(0.9100);transform-origin:0 50%;">Volume</div><div class="t" style="left:2392.65px;top:778.42px;font-size:12.5px;line-height:12.5px;color:#d8d8d8;transform:translateX(-50%) scaleX(0.8800);transform-origin:50% 50%;">100.0</div><div class="t" style="left:2882.4px;top:246.2px;font-size:13px;line-height:13px;font-weight:bold;color:#d6d6d6;text-shadow:1px 1px 1px rgba(0,0,0,.6);transform:scaleX(0.9130);transform-origin:0 50%;">Send Azure TTS Request</div><div class="t" style="left:2886px;top:307.47px;font-size:13px;line-height:13px;color:#f8f8f8;transform:scaleX(0.9100);transform-origin:0 50%;">TTS Settings</div><div class="t" style="left:3052.4px;top:307.47px;font-size:13px;line-height:13px;color:#f8f8f8;transform:translateX(-100%) scaleX(0.9100);transform-origin:100% 50%;">Async Action</div><div class="t" style="left:3056.3px;top:338.27px;font-size:13px;line-height:13px;color:#f8f8f8;transform:translateX(-100%) scaleX(0.9100);transform-origin:100% 50%;">On Complete</div><div class="t" style="left:3056.3px;top:369.27px;font-size:13px;line-height:13px;color:#f8f8f8;transform:translateX(-100%) scaleX(0.9100);transform-origin:100% 50%;">Audio Data</div><div class="t" style="left:3052.4px;top:399.37px;font-size:13px;line-height:13px;color:#f8f8f8;transform:translateX(-100%) scaleX(0.9100);transform-origin:100% 50%;">Error Status</div><div class="t" style="left:3257px;top:387.07px;font-size:28.5px;line-height:28.5px;font-weight:bold;color:#8c8c8c;transform:translateX(-50%) scaleX(0.7145);transform-origin:50% 50%;-webkit-text-stroke:.7px #8c8c8c;">Error</div><div class="t" style="left:3427.3px;top:310.7px;font-size:13px;line-height:13px;font-weight:bold;color:#d6d6d6;text-shadow:1px 1px 1px rgba(0,0,0,.6);transform:scaleX(0.9041);transform-origin:0 50%;">Branch</div><div class="t" style="left:3545.6px;top:340.97px;font-size:13px;line-height:13px;color:#f8f8f8;transform:translateX(-100%) scaleX(0.9100);transform-origin:100% 50%;">True</div><div class="t" style="left:3430.9px;top:372.37px;font-size:13px;line-height:13px;color:#f8f8f8;transform:scaleX(0.9100);transform-origin:0 50%;">Condition</div><div class="t" style="left:3545.6px;top:372.37px;font-size:13px;line-height:13px;color:#f8f8f8;transform:translateX(-100%) scaleX(0.9100);transform-origin:100% 50%;">False</div><div class="t" style="left:3624px;top:403.07px;font-size:13px;line-height:13px;color:#f8f8f8;transform:scaleX(0.9324);transform-origin:0 50%;">Audio Importer</div><div class="t" style="left:3794.3px;top:326.3px;font-size:13px;line-height:13px;font-weight:bold;color:#d6d6d6;text-shadow:1px 1px 1px rgba(0,0,0,.6);transform:scaleX(0.9278);transform-origin:0 50%;">Import Audio from Buffer</div><div class="t" style="left:3794.3px;top:342px;font-size:13px;line-height:13px;font-style:italic;color:#a3ab86;transform:scaleX(0.9381);transform-origin:0 50%;">Target is Runtime Audio Importer Library</div><div class="t" style="left:3798.7px;top:402.47px;font-size:13px;line-height:13px;color:#f8f8f8;transform:scaleX(0.9100);transform-origin:0 50%;">Target</div><div class="t" style="left:3794.3px;top:432.37px;font-size:13px;line-height:13px;color:#f8f8f8;transform:scaleX(0.9100);transform-origin:0 50%;">Audio Data</div><div class="t" style="left:3798px;top:461.67px;font-size:13px;line-height:13px;color:#f8f8f8;transform:scaleX(0.9100);transform-origin:0 50%;">Audio Format</div><div class="t" style="left:3814px;top:484.52px;font-size:11.8px;line-height:11.8px;color:#d2d2d2;transform:scaleX(0.9100);transform-origin:0 50%;">mp3</div></body></html>
